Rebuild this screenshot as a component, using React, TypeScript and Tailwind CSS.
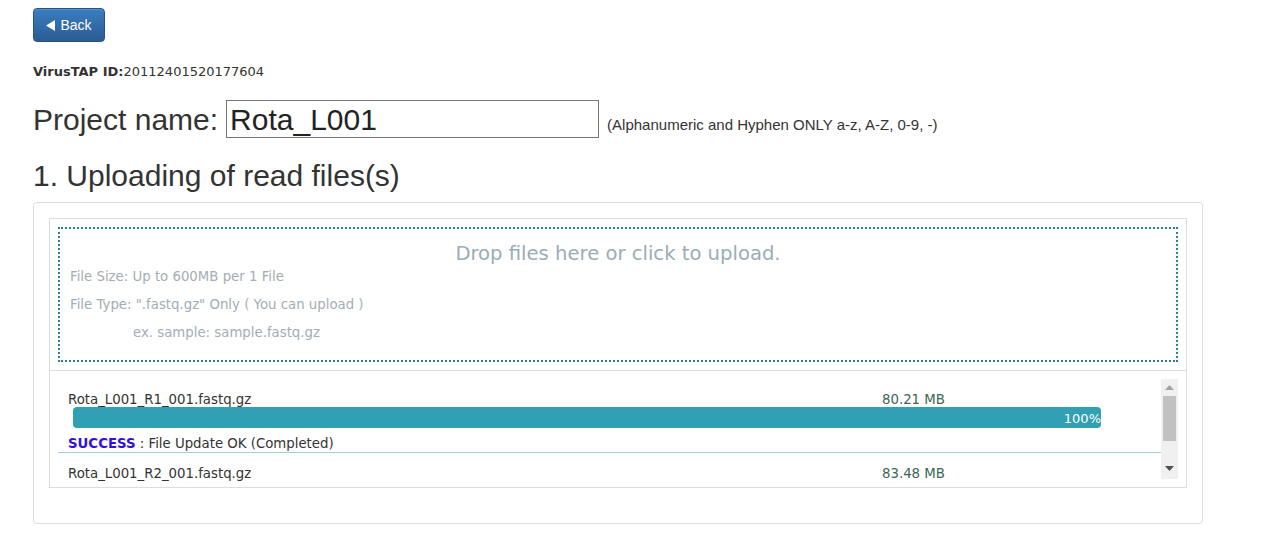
import React from 'react'

const files = [
  { name: 'Rota_L001_R1_001.fastq.gz', size: '80.21 MB', done: true },
  { name: 'Rota_L001_R2_001.fastq.gz', size: '83.48 MB', done: false },
]

const BackButton = () => (
  <button className="flex h-[34px] w-[72px] items-center justify-center gap-[5px] rounded-[4px] border border-[#245580] bg-gradient-to-b from-[#3b7dc0] to-[#2a5d93] text-[14px] text-white shadow-[inset_0_1px_0_rgba(255,255,255,0.15)]">
    <svg width="9" height="11" viewBox="0 0 9 11" className="mt-[1px]">
      <path d="M9 0 L9 11 L0 5.5 Z" fill="#fff" />
    </svg>
    <span>Back</span>
  </button>
)

const Scrollbar = () => (
  <div className="flex h-[100px] w-[17px] shrink-0 flex-col items-center bg-[#f0f0f0]">
    <svg width="9" height="5" viewBox="0 0 9 5" className="mt-[6px]">
      <path d="M0 5 L4.5 0 L9 5 Z" fill="#a3a3a3" />
    </svg>
    <div className="mt-[6px] h-[45px] w-[13px] bg-[#c1c1c1]" />
    <div className="flex-1" />
    <svg width="9" height="5" viewBox="0 0 9 5" className="mb-[8px]">
      <path d="M0 0 L9 0 L4.5 5 Z" fill="#505050" />
    </svg>
  </div>
)

export default function App() {
  return (
    <div className="min-h-[545px] bg-white pl-[33px] pt-[8px] font-['Liberation_Sans',Arial,sans-serif] text-[#333]">
      <BackButton />

      <div className="mt-[22px] font-['DejaVu_Sans',Verdana,sans-serif] text-[13px] leading-[16px] text-[#333]">
        <span className="font-bold">VirusTAP ID:</span>20112401520177604
      </div>

      <div className="mt-[20px] flex items-baseline">
        <span className="text-[30px] leading-[38px]">Project name:</span>
        <input
          readOnly
          value="Rota_L001"
          className="ml-[8px] h-[38px] w-[373px] border border-[#767676] px-[3px] text-[30px] text-[#222] outline-none"
        />
        <span className="ml-[8px] text-[15px]">(Alphanumeric and Hyphen ONLY a-z, A-Z, 0-9, -)</span>
      </div>

      <h3 className="mt-[20px] text-[30px] leading-[33px]">1. Uploading of read files(s)</h3>

      <div className="mt-[10px] w-[1170px] rounded-[4px] border border-[#ddd] px-[15px] pb-[35px] pt-[15px]">
        <div className="border border-[#ddd] font-['DejaVu_Sans',Verdana,sans-serif]">
          <div className="px-[8px] pb-[8px] pt-[8px]">
            <div className="h-[135px] border-2 border-dotted border-[#2a7f9e] pt-[15px]">
              <div className="h-[20px] text-center text-[19.6px] leading-[20px] text-[#99adb8]">
                Drop files here or click to upload.
              </div>
              <div className="-mt-[1px] pl-[10px] text-[13.3px] leading-[28px] text-[#a3adb5]">
                <p>File Size: Up to 600MB per 1 File</p>
                <p>File Type: ".fastq.gz" Only ( You can upload )</p>
                <p className="pl-[63px]">ex. sample: sample.fastq.gz</p>
              </div>
            </div>
          </div>

          <div className="flex border-t border-[#ddd] px-[8px] pb-[6px] pt-[8px]">
            <div className="h-[102px] flex-1 overflow-hidden">
              {files.map((f) => (
                <div key={f.name} className={f.done ? 'border-b border-[#a6cdd6] pt-[13px]' : 'pt-[13px]'}>
                  <div className="flex h-[18px] text-[13.3px] leading-[16px] text-[#333]">
                    <span className="w-[824px] pl-[10px]">{f.name}</span>
                    <span className="text-[#3b6655]">{f.size}</span>
                  </div>
                  {f.done && (
                    <>
                      <div className="ml-[15px] -mt-[3px] flex h-[21px] w-[1028px] items-end justify-end rounded-[4px] bg-[#31a0b4] text-[13px] leading-[18px] text-white">
                        100%
                      </div>
                      <div className="mt-[8px] h-[16px] pl-[10px] text-[13.3px] leading-[16px]">
                        <span className="font-bold text-[#3311dd]">SUCCESS</span> : File Update OK (Completed)
                      </div>
                    </>
                  )}
                </div>
              ))}
            </div>
            <Scrollbar />
          </div>
        </div>
      </div>
    </div>
  )
}
